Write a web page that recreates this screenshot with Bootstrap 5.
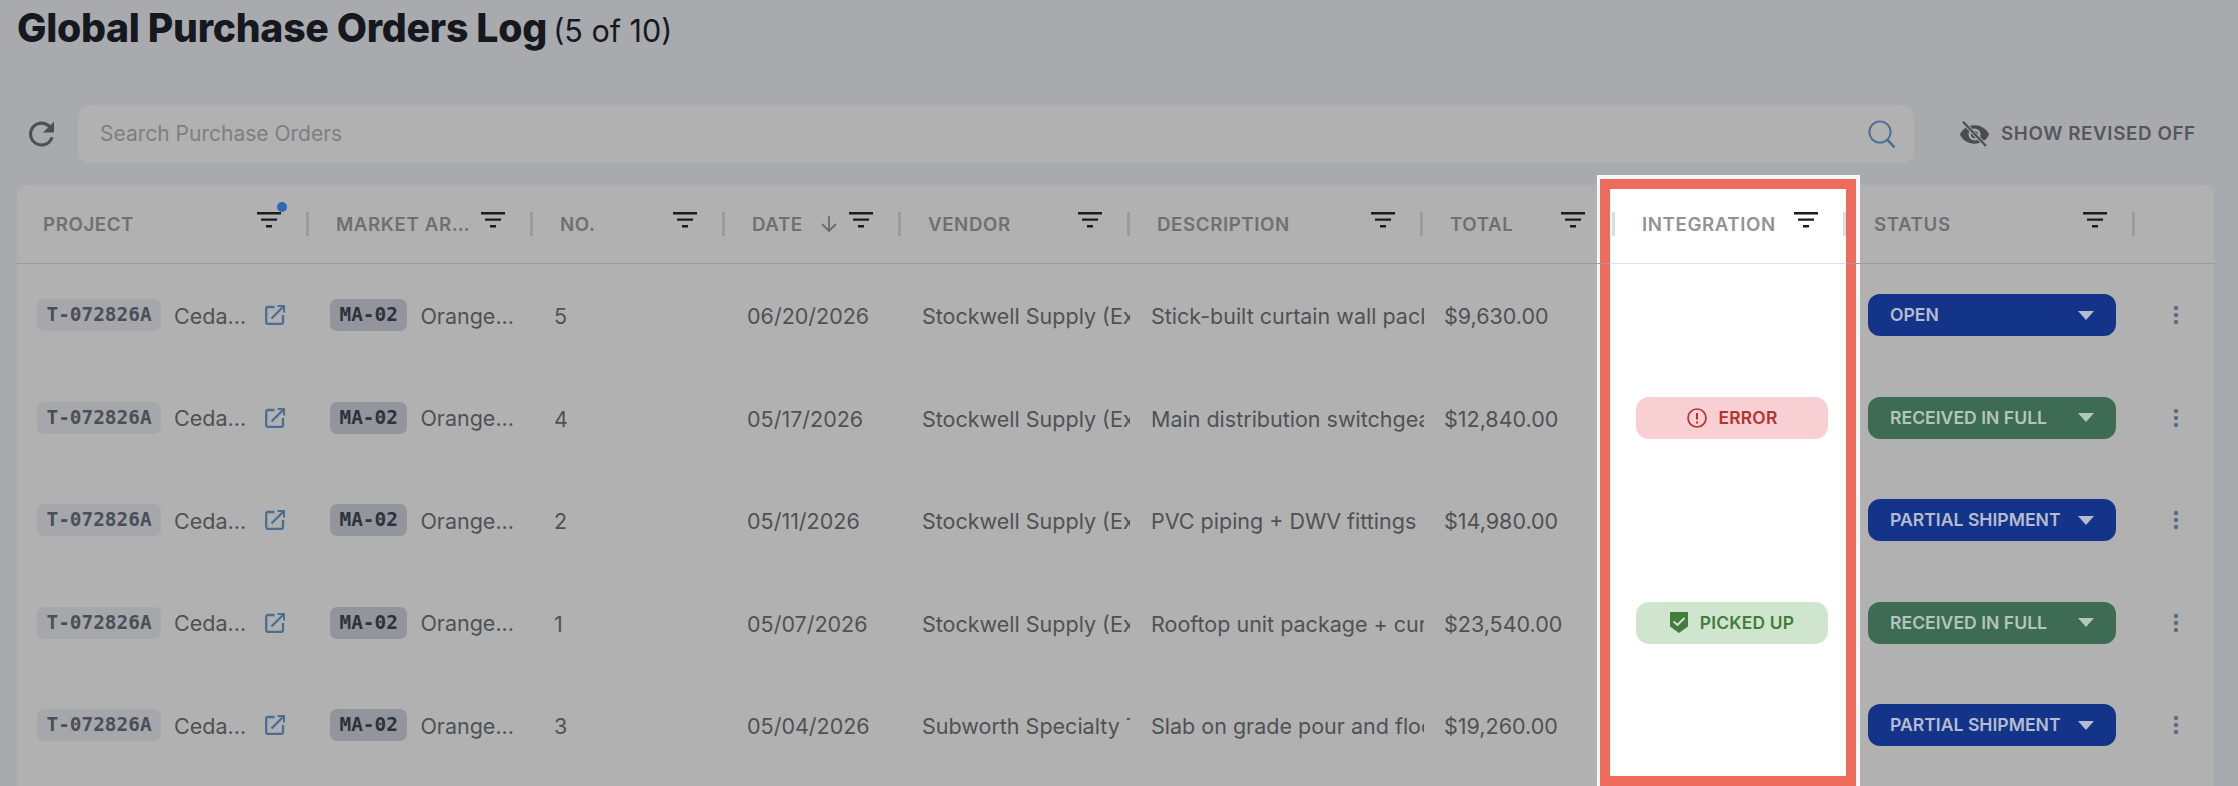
<!DOCTYPE html>
<html lang="en">
<head>
<meta charset="utf-8">
<title>Global Purchase Orders Log</title>
<link href="https://cdn.jsdelivr.net/npm/bootstrap@5.3.0/dist/css/bootstrap.min.css" rel="stylesheet">
<style>
html,body{height:786px;overflow:hidden}
body{background:#a9aaae;font-family:Inter,"Liberation Sans",sans-serif;color:#4f5154;padding:0 24px 0 17px}
.pg-title{font-size:39.2px;font-weight:800;color:#15191f;line-height:48px;margin:4px 0 0;letter-spacing:-.3px;height:53px}
.pg-title span{font-size:30.5px;font-weight:400;letter-spacing:0;margin-left:-2px}
.tool-row{height:58px;margin-top:48px;margin-bottom:22px}
.refresh-box{width:61px;padding-left:12px;flex:none}
.search-box{background:#b1b1b1;border-radius:12px;padding:0 18px 0 22px;height:58px}
.search-ph{font-size:21px;color:#7e7f80}
.rev-btn{width:300px;flex:none;padding-left:46px;gap:12px;font-size:18.8px;font-weight:600;letter-spacing:.6px;color:#55575a;white-space:nowrap}
.log-card{background:#b1b1b1;border-radius:8px 8px 0 0;height:640px;position:relative}
.log-table{--bs-table-bg:transparent;--bs-table-border-color:#9d9d9e;table-layout:fixed;width:2197px;margin:0;position:relative;z-index:2;border-collapse:separate;border-spacing:0;color:#4f5154}
.log-table>thead>tr>th{padding:0;height:79px;border-bottom:1px solid #9d9d9e;vertical-align:middle;font-weight:600;box-shadow:none}
.log-table>tbody>tr>td{padding:0 0 0 22px;height:102.5px;border:0;vertical-align:middle;font-size:21.5px;white-space:nowrap;box-shadow:none}
.log-table>tbody>tr>td.txt-cell{padding-top:2px}
.head-in{height:24px;padding-left:28px;font-size:18.7px;letter-spacing:.6px;color:#6e7073}
.head-lbl{flex:1 1 0;min-width:0;overflow:hidden;text-overflow:ellipsis;white-space:nowrap;padding:2px 8px 0 0;line-height:24px}
.first-in{padding-left:26px}
.flt{width:24px;height:16px;flex:none;margin:-8px 25px 0 0;position:relative;display:block}
.flt-dot{position:absolute;right:-6px;top:-10px;width:10px;height:10px;border-radius:50%;background:#2c68b5}
.sep{width:3px;height:24px;background:#9b9b9c;flex:none;margin-right:-1px}
.sort-ic{margin-right:11px;flex:none}
.mono-tag{font-family:"DejaVu Sans Mono","Liberation Mono",monospace;font-weight:700;font-size:19.4px;border-radius:7px;height:32px;line-height:31px;padding:0 9.5px;display:inline-block;flex:none}
.tag-a{background:#a5a7ab;color:#4a4f58}
.tag-b{background:#92959b;color:#2e323a}
.trunc-a{width:74px;margin-left:13px;flex:none;padding-top:1px}
.trunc-b{width:94px;margin-left:13px;flex:none;padding-top:1px}
.clip-v{width:208px;overflow:hidden}
.clip-d{width:273px;overflow:hidden}
.ext-ic{margin-left:17px;flex:none}
.log-table>tbody>tr>td.proj-cell{padding-left:20px}
.log-table>tbody>tr>td.date-cell{padding-left:23px}
.log-table>thead>tr>th.int-th{border-bottom-color:#e2e2e2}
.int-th .sep{background:#dcdcdc;margin-right:0}
.int-th .sep-l{margin:0 0 0 1.5px}
.int-th .head-in{padding-left:0;color:#909397}
.int-th .head-lbl{margin-left:27.5px}
.int-th .flt{margin-right:25.5px}
.log-table>tbody>tr>td.int-cell{padding:0 0 0 26px}
.pill-st{width:192px;height:42px;border-radius:13px;font-size:17.4px;font-weight:600;letter-spacing:.2px;gap:12px}
.pill-err{background:#f8cfd3;color:#b5322f}
.pill-ok{background:#d0e5cd;color:#437d3c}
.st-drop{width:248px;height:42px;border-radius:12px;padding:0 22px;font-size:17.6px;font-weight:600}
.st-blue{background:#14348a;color:#b5bccf}
.st-green{background:#3d6b54;color:#b4c5bc}
.tri{width:0;height:0;border-left:8px solid transparent;border-right:8px solid transparent;border-top:9px solid currentColor}
.kebab{margin-left:17px;width:6px;display:block}
.spot{position:absolute;z-index:1;left:1583px;top:-6px;width:256px;height:607px;background:#fff;border:10px solid #ee6b5b;box-shadow:.5px -.5px 0 3.5px #f3f6fb}
</style>
</head>
<body>
<h1 class="pg-title">Global Purchase Orders Log <span>(5 of 10)</span></h1>

<div class="tool-row d-flex align-items-center">
  <div class="refresh-box d-flex align-items-center">
    <svg width="25" height="26" viewBox="4 4 16 16" fill="#4f5052"><path d="M17.65 6.35A7.958 7.958 0 0 0 12 4c-4.42 0-7.99 3.58-7.99 8s3.57 8 7.99 8c3.73 0 6.84-2.55 7.73-6h-2.08A5.99 5.99 0 0 1 12 18c-3.31 0-6-2.69-6-6s2.69-6 6-6c1.66 0 3.14.69 4.22 1.78L13 11h7V4l-2.35 2.35z"/></svg>
  </div>
  <div class="search-box flex-grow-1 d-flex align-items-center justify-content-between">
    <span class="search-ph">Search Purchase Orders</span>
    <svg width="28" height="29" viewBox="0 0 28 29" fill="none" stroke="#4a6f92"><circle cx="12" cy="12" r="10.6" stroke-width="1.8"/><path d="M19.5 19.8L26.5 27.5" stroke-width="2.6"/></svg>
  </div>
  <div class="rev-btn d-flex align-items-center">
    <svg width="29" height="29" viewBox="0 0 24 24"><path fill="#4a4c4f" d="M0 12C2.2 7.2 6.6 4.4 12 4.4S21.8 7.2 24 12c-2.200 4.800-6.600 7.600-12 7.600S2.200 16.800 0 12z"/><circle cx="12" cy="12" r="5" fill="#a9aaae"/><circle cx="12" cy="12" r="3" fill="#4a4c4f"/><path d="M3 2l19 20" stroke="#a9aaae" stroke-width="3.400"/><path d="M2.500 1.500L21.500 21.500" stroke="#4a4c4f" stroke-width="1.700"/></svg>
    <span>SHOW REVISED OFF</span>
  </div>
</div>

<div class="log-card">
  <div class="spot"></div>
  <table class="table log-table">
    <colgroup>
      <col style="width:291px"><col style="width:224px"><col style="width:192px"><col style="width:176px"><col style="width:229px"><col style="width:293px"><col style="width:188px"><col style="width:236px"><col style="width:288px"><col style="width:80px">
    </colgroup>
    <thead>
      <tr>
        <th><div class="head-in first-in d-flex align-items-center"><span class="head-lbl">PROJECT</span><span class="flt"><svg width="24" height="16" viewBox="0 0 24 16" fill="#1a1c1f" class="d-block"><path d="M0 0h24v2.6H0zM4 6.5h16v2.2H4zM9 13h6v2.6H9z"/></svg><span class="flt-dot"></span></span><span class="sep"></span></div></th>
        <th><div class="head-in d-flex align-items-center"><span class="head-lbl">MARKET AREA</span><span class="flt"><svg width="24" height="16" viewBox="0 0 24 16" fill="#1a1c1f" class="d-block"><path d="M0 0h24v2.6H0zM4 6.5h16v2.2H4zM9 13h6v2.6H9z"/></svg></span><span class="sep"></span></div></th>
        <th><div class="head-in d-flex align-items-center"><span class="head-lbl">NO.</span><span class="flt"><svg width="24" height="16" viewBox="0 0 24 16" fill="#1a1c1f" class="d-block"><path d="M0 0h24v2.6H0zM4 6.5h16v2.2H4zM9 13h6v2.6H9z"/></svg></span><span class="sep"></span></div></th>
        <th><div class="head-in d-flex align-items-center"><span class="head-lbl">DATE</span><svg class="sort-ic" width="18" height="16" viewBox="0 0 18 16" fill="none" stroke="#6a6c6f" stroke-width="1.8"><path d="M9 0v15M2 8l7 7 7-7"/></svg><span class="flt"><svg width="24" height="16" viewBox="0 0 24 16" fill="#1a1c1f" class="d-block"><path d="M0 0h24v2.6H0zM4 6.5h16v2.2H4zM9 13h6v2.6H9z"/></svg></span><span class="sep"></span></div></th>
        <th><div class="head-in d-flex align-items-center"><span class="head-lbl">VENDOR</span><span class="flt"><svg width="24" height="16" viewBox="0 0 24 16" fill="#1a1c1f" class="d-block"><path d="M0 0h24v2.6H0zM4 6.5h16v2.2H4zM9 13h6v2.6H9z"/></svg></span><span class="sep"></span></div></th>
        <th><div class="head-in d-flex align-items-center"><span class="head-lbl">DESCRIPTION</span><span class="flt"><svg width="24" height="16" viewBox="0 0 24 16" fill="#1a1c1f" class="d-block"><path d="M0 0h24v2.6H0zM4 6.5h16v2.2H4zM9 13h6v2.6H9z"/></svg></span><span class="sep"></span></div></th>
        <th><div class="head-in d-flex align-items-center"><span class="head-lbl">TOTAL</span><span class="flt"><svg width="24" height="16" viewBox="0 0 24 16" fill="#1a1c1f" class="d-block"><path d="M0 0h24v2.6H0zM4 6.5h16v2.2H4zM9 13h6v2.6H9z"/></svg></span></div></th>
        <th class="int-th"><div class="head-in d-flex align-items-center"><span class="sep sep-l"></span><span class="head-lbl">INTEGRATION</span><span class="flt"><svg width="24" height="16" viewBox="0 0 24 16" fill="#1a1c1f" class="d-block"><path d="M0 0h24v2.6H0zM4 6.5h16v2.2H4zM9 13h6v2.6H9z"/></svg></span><span class="sep"></span></div></th>
        <th><div class="head-in d-flex align-items-center"><span class="head-lbl">STATUS</span><span class="flt"><svg width="24" height="16" viewBox="0 0 24 16" fill="#1a1c1f" class="d-block"><path d="M0 0h24v2.6H0zM4 6.5h16v2.2H4zM9 13h6v2.6H9z"/></svg></span><span class="sep"></span></div></th>
        <th></th>
      </tr>
    </thead>
    <tbody id="rows"></tbody>
  </table>
</div>

<script>
const data=[
 ["5","06/20/2026","Stockwell Supply (Example)","Stick-built curtain wall package","$9,630.00","","OPEN","b"],
 ["4","05/17/2026","Stockwell Supply (Example)","Main distribution switchgear","$12,840.00","e","RECEIVED IN FULL","g"],
 ["2","05/11/2026","Stockwell Supply (Example)","PVC piping + DWV fittings","$14,980.00","","PARTIAL SHIPMENT","b"],
 ["1","05/07/2026","Stockwell Supply (Example)","Rooftop unit package + curbs","$23,540.00","k","RECEIVED IN FULL","g"],
 ["3","05/04/2026","Subworth Specialty Trades","Slab on grade pour and floor finish","$19,260.00","","PARTIAL SHIPMENT","b"]];
const ext='<svg class="ext-ic" width="20" height="20" viewBox="0 0 20 20" fill="none" stroke="#4a6f92" stroke-width="2.3"><path d="M9.5 2H3a1.8 1.8 0 0 0-1.8 1.8v13.2A1.8 1.8 0 0 0 3 18.8h13.2a1.8 1.8 0 0 0 1.8-1.8v-7M6.5 13.5L18 2"/><path d="M12.5 1h6.5v6.5" stroke-width="2"/></svg>';
const errIc='<svg width="20" height="20" viewBox="0 0 20 20" fill="none" stroke="currentColor" stroke-width="1.7"><circle cx="10" cy="10" r="9"/><path d="M10 5v6.5M10 13.5v2" stroke-width="2"/></svg>';
const okIc='<svg width="18" height="21" viewBox="0 0 18 21"><path fill="currentColor" d="M1 0h16a1 1 0 0 1 1 1v13.5L9 21 0 14.5V1a1 1 0 0 1 1-1z"/><path d="M3.5 9.5L7.500 13L14.500 6" fill="none" stroke="#d0e5cd" stroke-width="2"/></svg>';
document.getElementById('rows').innerHTML=data.map(r=>{
 let pill='';
 if(r[5]==='e')pill='<div class="pill-st pill-err d-flex align-items-center justify-content-center">'+errIc+'<span>ERROR</span></div>';
 if(r[5]==='k')pill='<div class="pill-st pill-ok d-flex align-items-center justify-content-center">'+okIc+'<span>PICKED UP</span></div>';
 return '<tr><td class="proj-cell"><div class="d-flex align-items-center"><span class="mono-tag tag-a">T-072826A</span><span class="trunc-a">Ceda...</span>'+ext+'</div></td>'+
 '<td><div class="d-flex align-items-center"><span class="mono-tag tag-b">MA-02</span><span class="trunc-b">Orange...</span></div></td>'+
 '<td class="txt-cell">'+r[0]+'</td><td class="txt-cell date-cell">'+r[1]+'</td><td class="txt-cell"><div class="clip-v">'+r[2]+'</div></td><td class="txt-cell"><div class="clip-d">'+r[3]+'</div></td><td class="txt-cell">'+r[4]+'</td>'+
 '<td class="int-cell">'+pill+'</td>'+
 '<td><div class="st-drop '+(r[7]==='b'?'st-blue':'st-green')+' d-flex align-items-center justify-content-between"><span>'+r[6]+'</span><span class="tri"></span></div></td>'+
 '<td><svg class="kebab" width="6" height="20" viewBox="0 0 6 20" fill="#566d85"><circle cx="3" cy="3" r="2.2"/><circle cx="3" cy="10" r="2.2"/><circle cx="3" cy="17" r="2.2"/></svg></td></tr>';
}).join('');
</script>
<script src="https://cdn.jsdelivr.net/npm/bootstrap@5.3.0/dist/js/bootstrap.bundle.min.js"></script>
</body>
</html>
